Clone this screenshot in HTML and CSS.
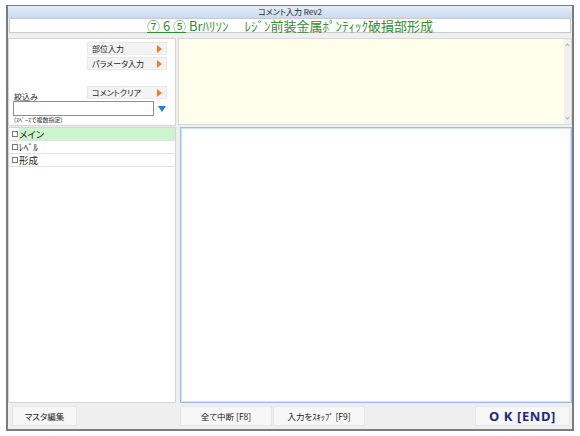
FILE: index.html
```html
<!DOCTYPE html>
<html lang="ja">
<head>
<meta charset="utf-8">
<link rel="stylesheet" href="styles.css">
</head>
<body>
<div class="window">
  <div class="titlebar">コメント入力 Rev2</div>
  <div class="header"><span class="ul">⑦ 6 ⑤</span> Brﾊﾘｿﾝ　 ﾚｼﾞﾝ前装金属ﾎﾟﾝﾃｨｯｸ破損部形成</div>
  <div class="body">
    <div class="left">
      <div class="lp-top">
        <div class="side-btn">部位入力<span class="otri"></span></div>
        <div class="side-btn gap2">パラメータ入力<span class="otri"></span></div>
        <div class="row-clear">
          <span class="lbl">絞込み</span>
          <div class="side-btn flat">コメントクリア<span class="otri"></span></div>
        </div>
        <div class="search-row">
          <div class="input"></div>
          <span class="btri"></span>
        </div>
        <div class="hint">(ｽﾍﾟｰｽで複数指定)</div>
      </div>
      <div class="list">
        <div class="item"><span class="chk"></span><span class="txt sel">メイン</span></div>
        <div class="item"><span class="chk"></span><span class="txt">ﾚﾍﾞﾙ</span></div>
        <div class="item"><span class="chk"></span><span class="txt">形成</span></div>
      </div>
    </div>
    <div class="right">
      <div class="memo">
        <div class="memo-area"></div>
        <div class="vscroll"><span class="arr up"></span><span class="arr down"></span></div>
      </div>
      <div class="editor"></div>
    </div>
  </div>
  <div class="bottom">
    <div class="btn b-master">マスタ編集</div>
    <div class="btn b-stop">全て中断 [F8]</div>
    <div class="btn b-skip">入力をｽｷｯﾌﾟ [F9]</div>
    <div class="btn b-ok">O K [END]</div>
  </div>
</div>
</body>
</html>
```
FILE: styles.css
```css
* { box-sizing: border-box; }
body {
  margin: 0;
  background: #ffffff;
  font-family: "Noto Sans CJK JP", "Noto Sans", sans-serif;
  font-feature-settings: "palt";
  color: #222;
}
.window {
  margin: 5px 0 0 6px;
  width: 568px;
  height: 426px;
  border: 2px solid #7c7c7c;
  border-top-width: 1px;
  background: #efefef;
  display: flex;
  flex-direction: column;
}
.titlebar {
  height: 12px;
  line-height: 12px;
  font-size: 8px;
  text-align: center;
  background: linear-gradient(#e4eef9, #c8dbef);
  color: #222;
  overflow: hidden;
}
.header {
  height: 15px;
  margin: 0 1px;
  background: #fff;
  border: 1px solid #c9c9c9;
  text-align: center;
  font-size: 13px;
  line-height: 13px;
  color: #2f8f2f;
  white-space: pre;
}
.header .ul { text-decoration: underline; }
.body {
  margin-top: 5px;
  height: 365px;
  display: flex;
  gap: 2px;
}
.left {
  width: 168px;
  display: flex;
  flex-direction: column;
  gap: 1px;
}
.lp-top {
  height: 88px;
  background: #fff;
  border: 1px solid #d4d4d4;
  padding: 3px 8px 0 4px;
  display: flex;
  flex-direction: column;
}
.side-btn {
  margin-left: 74px;
  width: 80px;
  height: 13px;
  background: #f3f3f3;
  border: 1px solid #e8e8e8;
  font-size: 8px;
  line-height: 11px;
  padding-left: 4px;
  display: flex;
  align-items: center;
  justify-content: space-between;
  padding-right: 4px;
}
.side-btn.gap2 { margin-top: 2px; }
.side-btn.flat { margin-left: 0; }
.otri {
  width: 0;
  height: 0;
  border-top: 4px solid transparent;
  border-bottom: 4px solid transparent;
  border-left: 5px solid #f07a30;
}
.row-clear {
  margin-top: 16px;
  height: 15px;
  display: flex;
  justify-content: space-between;
  align-items: flex-start;
}
.lbl {
  align-self: flex-end;
  font-size: 8px;
  line-height: 9px;
  padding-left: 1px;
}
.search-row {
  display: flex;
  align-items: center;
  height: 15px;
}
.input {
  width: 141px;
  height: 15px;
  border: 1px solid #8e8e8e;
  background: #fff;
}
.btri {
  margin-left: 4px;
  width: 0;
  height: 0;
  border-left: 4px solid transparent;
  border-right: 4px solid transparent;
  border-top: 6px solid #1f80dc;
}
.hint {
  font-size: 6px;
  line-height: 8px;
  padding-left: 1px;
  color: #333;
}
.list {
  flex: 1;
  background: #fff;
  border: 1px solid #d4d4d4;
}
.item {
  height: 13px;
  border-bottom: 1px solid #e2e2e2;
  display: flex;
  align-items: center;
}
.chk {
  width: 6px;
  height: 6px;
  border: 1px solid #7a7a7a;
  margin: 0 1px 0 3px;
  flex: none;
}
.txt {
  flex: 1;
  height: 12px;
  font-size: 9.5px;
  line-height: 12px;
  color: #222;
}
.txt.sel { background: #cdf5cd; }
.right {
  flex: 1;
  display: flex;
  flex-direction: column;
  gap: 2px;
}
.memo {
  height: 87px;
  border: 1px solid #d8d8d8;
  background: #fffeea;
  display: flex;
}
.memo-area { flex: 1; }
.vscroll {
  width: 7px;
  background: #f0f0f0;
  display: flex;
  flex-direction: column;
  justify-content: space-between;
  align-items: center;
  padding: 4px 0;
}
.arr {
  width: 3px;
  height: 3px;
  border-left: 1px solid #b0b0b0;
  border-top: 1px solid #b0b0b0;
}
.arr.up { transform: rotate(45deg); margin-top: 1px; }
.arr.down { transform: rotate(225deg); margin-bottom: 1px; }
.editor {
  flex: 1;
  margin-left: 2px;
  background: #fff;
  border: 1px solid #99c0ea;
  box-shadow: inset 0 0 0 1px #d2e4f7;
}
.bottom {
  flex: 1;
  display: flex;
  align-items: center;
}
.btn {
  height: 20px;
  background: #f7f7f7;
  border: 1px solid #e6e6e6;
  font-size: 8.5px;
  display: flex;
  align-items: center;
  justify-content: center;
  color: #222;
}
.b-master { margin-left: 4px; width: 65px; }
.b-stop { margin-left: 103px; width: 92px; }
.b-skip { margin-left: 1px; width: 92px; }
.b-ok {
  margin-left: auto;
  margin-right: 2px;
  width: 95px;
  font-size: 13px;
  font-weight: bold;
  color: #1d2a7e;
  letter-spacing: 0.6px;
  font-family: "Noto Sans", sans-serif;
}
```
